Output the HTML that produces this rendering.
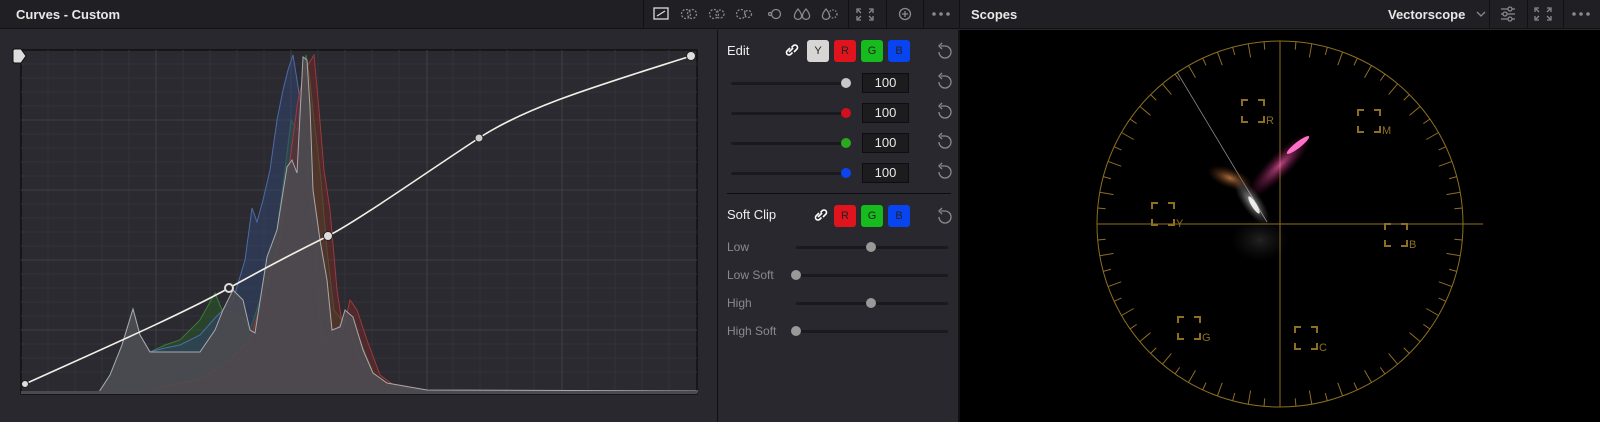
<!DOCTYPE html>
<html><head><meta charset="utf-8"><style>
*{margin:0;padding:0;box-sizing:border-box}
body{width:1600px;height:422px;background:#28282e;font-family:"Liberation Sans",sans-serif;position:relative;overflow:hidden;color:#ddd}
.abs{position:absolute}
.hdr{left:0;top:0;width:1600px;height:29px;background:#1f1f24;border-bottom:1px solid #111}
.t{font-size:13px;font-weight:bold;color:#e8e8e8}
.sep{top:0;width:1px;height:29px;background:#111}
.btn{width:22px;height:22px;border-radius:3px;font-size:11px;text-align:center;line-height:22px;color:#222}
.lab{font-size:12px;color:#8a8a8e}
.track{height:3px;background:#1a1a1e;border-radius:2px}
.knob{width:10px;height:10px;border-radius:5px}
.num{width:47px;height:20px;background:#1c1c1f;border:1px solid #0e0e10;font-size:13px;color:#e8e8e8;text-align:center;line-height:18px}
</style></head><body>
<div class="abs hdr"></div>
<div class="abs t" style="left:16px;top:7px">Curves - Custom</div>
<div class="abs sep" style="left:643px"></div>
<div class="abs sep" style="left:848px"></div>
<div class="abs sep" style="left:886px"></div>
<div class="abs sep" style="left:923px"></div>
<div class="abs sep" style="left:959px"></div>
<div class="abs sep" style="left:1489px"></div>
<div class="abs sep" style="left:1527px"></div>
<div class="abs sep" style="left:1563px"></div>
<div class="abs t" style="left:971px;top:7px">Scopes</div>
<div class="abs t" style="left:1388px;top:7px">Vectorscope</div>
<svg class="abs" style="left:0;top:0" width="1600" height="29" fill="none" stroke="#8a8a8e" stroke-width="1.3">
<rect x="654" y="8" width="14" height="11" stroke="#ddd"/><line x1="657" y1="16" x2="665" y2="11" stroke="#ddd"/>
<g stroke-dasharray="2 1.5"><circle cx="686" cy="14" r="4.5"/><circle cx="692" cy="14" r="4.5"/>
<circle cx="714" cy="14" r="4.5"/><circle cx="720" cy="14" r="4"/>
<circle cx="741" cy="14" r="4.5"/><circle cx="748" cy="14" r="3.5"/></g>
<circle cx="770" cy="14" r="1.5"/><circle cx="776" cy="14" r="4.5"/>
<path d="M798 9Q793 15 795 18A4 4 0 0 0 801 18Q803 15 798 9Z"/><path d="M806 9Q801 15 803 18A4 4 0 0 0 809 18Q811 15 806 9Z"/>
<path d="M826 9Q821 15 823 18A4 4 0 0 0 829 18Q831 15 826 9Z"/><g stroke-dasharray="1.5 1.5"><circle cx="833" cy="14" r="4"/></g>
<path d="M861 9h-4v4M869 9h4v4M861 20h-4v-4M869 20h4v-4M858 10l3 3M872 10l-3 3M858 19l3-3M872 19l-3-3"/>
<circle cx="905" cy="14" r="5.5"/><path d="M905 11v6M902 14h6"/>
<path d="M1477 12l4 4 4-4"/>
<path d="M1501 9h14M1501 14h14M1501 19h14"/><circle cx="1510" cy="9" r="2" fill="#1f1f24"/><circle cx="1505" cy="14" r="2" fill="#1f1f24"/><circle cx="1510" cy="19" r="2" fill="#1f1f24"/>
<path d="M1539 8h-4v4M1547 8h4v4M1539 20h-4v-4M1547 20h4v-4M1536 9l3 3M1550 9l-3 3M1536 19l3-3M1550 19l-3-3"/>
<g fill="#8a8a8e" stroke="none"><circle cx="934" cy="14" r="1.8"/><circle cx="941" cy="14" r="1.8"/><circle cx="948" cy="14" r="1.8"/>
<circle cx="1574" cy="14" r="1.8"/><circle cx="1581" cy="14" r="1.8"/><circle cx="1588" cy="14" r="1.8"/></g>
</svg>

<svg class="abs" style="left:0;top:0" width="717" height="422">
<rect x="21" y="50" width="676" height="344" fill="#2a2a30" stroke="#111" stroke-width="1.5"/>
<g stroke="#333339" stroke-width="1">
<path d="M48 50V394M75 50V394M102 50V394M129 50V394M183 50V394M210 50V394M237 50V394M264 50V394M318 50V394M345 50V394M372 50V394M399 50V394M453 50V394M480 50V394M507 50V394M534 50V394M588 50V394M615 50V394M642 50V394M669 50V394"/>
<path d="M21 64H697M21 78H697M21 92H697M21 106H697M21 134H697M21 148H697M21 162H697M21 176H697M21 204H697M21 218H697M21 232H697M21 246H697M21 274H697M21 288H697M21 302H697M21 316H697M21 344H697M21 358H697M21 372H697"/>
</g>
<g stroke="#3f3f46" stroke-width="1"><path d="M156 50V394M291 50V394M427 50V394M562 50V394M21 120H697M21 190H697M21 260H697M21 330H697"/></g>
<path d="M99 392L110 375L122 345L133 309L140 335L150 352L165 345L180 340L200 320L215 293L222 310L235 312L245 320L250 330L260 300L267 257L277 230L285 170L291 120L297 130L306 55L310 80L314 120L320 170L327 250L334 310L342 320L352 320L362 345L375 378L390 387L430 391L697 392Z" fill="rgba(40,90,40,0.55)" stroke="#3e7a3a" stroke-width="1"/>
<path d="M99 392L110 375L122 345L133 309L140 335L150 352L165 348L180 345L200 335L215 318L233 300L245 260L252 208L257 222L263 200L270 170L277 120L283 90L288 70L293 55L297 80L303 120L310 190L316 260L320 320L323 343L335 330L345 320L355 345L365 370L380 385L420 391L697 392Z" fill="rgba(50,70,110,0.55)" stroke="#4d6aa8" stroke-width="1"/>
<path d="M150 392L170 385L200 380L230 360L250 340L265 290L280 240L290 160L298 100L305 70L314 55L319 110L324 170L330 210L337 290L343 330L350 300L357 310L367 340L380 375L395 386L430 391L697 392Z" fill="rgba(110,40,40,0.55)" stroke="#9a3a3a" stroke-width="1"/>
<path d="M99 392L110 375L122 345L133 309L140 335L150 352L165 352L184 352L200 352L215 330L223 310L233 290L243 300L250 330L255 333L267 257L277 230L287 167L292 160L297 173L303 57L307 60L310 107L313 190L320 240L327 280L332 330L340 327L345 310L353 317L363 350L373 373L387 383L427 390L697 391L697 392Z" fill="#4c4b50" fill-opacity="0.88" stroke="#a8a8ac" stroke-width="1"/>
<line x1="21" y1="392.5" x2="697" y2="392.5" stroke="#4a4a50" stroke-width="3"/>
<path d="M25 384C100 350 180 315 229 288S300 250 328 236S430 170 479 138S600 85 691 56" fill="none" stroke="#f3efe6" stroke-width="1.6"/>
<circle cx="25" cy="384" r="3.5" fill="#ddd" stroke="#222"/>
<circle cx="229" cy="288" r="4" fill="#28282e" stroke="#ddd" stroke-width="2"/>
<circle cx="328" cy="236" r="4.5" fill="#ddd" stroke="#222"/>
<circle cx="479" cy="138" r="4" fill="#ccc" stroke="#222"/>
<circle cx="691" cy="56" r="4.5" fill="#ddd" stroke="#222"/>
<path d="M13 51Q13 49 15 49L21 49L26 56L21 63L15 63Q13 63 13 61Z" fill="#ddd" stroke="#111"/>
</svg>

<div class="abs" style="left:717px;top:30px;width:1px;height:392px;background:#111"></div>
<div class="abs" style="left:958px;top:30px;width:2px;height:392px;background:#111"></div>
<div class="abs t" style="left:727px;top:43px;font-weight:normal;color:#eee">Edit</div>
<div class="abs btn" style="left:807px;top:40px;background:#d8d6d4">Y</div>
<div class="abs btn" style="left:834px;top:40px;background:#e0141c">R</div>
<div class="abs btn" style="left:861px;top:40px;background:#16bb1e">G</div>
<div class="abs btn" style="left:888px;top:40px;background:#0845f0">B</div>
<div class="abs t" style="left:727px;top:207px;font-weight:normal;color:#eee">Soft Clip</div>
<div class="abs btn" style="left:834px;top:205px;background:#e0141c">R</div>
<div class="abs btn" style="left:861px;top:205px;background:#16bb1e">G</div>
<div class="abs btn" style="left:888px;top:205px;background:#0845f0">B</div>
<div class="abs" style="left:727px;top:193px;width:224px;height:1px;background:#0e0e10"></div>

<div class="abs track" style="left:731px;top:82px;width:115px"></div><div class="abs knob" style="left:841px;top:78px;background:#c8c8c8"></div>
<div class="abs track" style="left:731px;top:112px;width:115px"></div><div class="abs knob" style="left:841px;top:108px;background:#d0101c"></div>
<div class="abs track" style="left:731px;top:142px;width:115px"></div><div class="abs knob" style="left:841px;top:138px;background:#2aa81e"></div>
<div class="abs track" style="left:731px;top:172px;width:115px"></div><div class="abs knob" style="left:841px;top:168px;background:#0c45f0"></div>
<div class="abs num" style="left:862px;top:73px">100</div>
<div class="abs num" style="left:862px;top:103px">100</div>
<div class="abs num" style="left:862px;top:133px">100</div>
<div class="abs num" style="left:862px;top:163px">100</div>

<div class="abs lab" style="left:727px;top:240px">Low</div>
<div class="abs lab" style="left:727px;top:268px">Low Soft</div>
<div class="abs lab" style="left:727px;top:296px">High</div>
<div class="abs lab" style="left:727px;top:324px">High Soft</div>
<div class="abs track" style="left:796px;top:246px;width:152px"></div><div class="abs knob" style="left:866px;top:242px;background:#999"></div>
<div class="abs track" style="left:796px;top:274px;width:152px"></div><div class="abs knob" style="left:791px;top:270px;background:#999"></div>
<div class="abs track" style="left:796px;top:302px;width:152px"></div><div class="abs knob" style="left:866px;top:298px;background:#999"></div>
<div class="abs track" style="left:796px;top:330px;width:152px"></div><div class="abs knob" style="left:791px;top:326px;background:#999"></div>

<svg class="abs" style="left:717px;top:30px" width="241" height="200" fill="none" stroke="#8a8a8e" stroke-width="1.3">
<g id="rs"><path d="M222 22A6 6 0 1 0 228 16L224 16M225 13l-3 3 3 3"/></g>
<use href="#rs" y="30"/><use href="#rs" y="60"/><use href="#rs" y="90"/><use href="#rs" y="120"/><use href="#rs" y="165"/>
<g stroke="#fff" stroke-width="1.6"><path d="M77 22l3-3a2.5 2.5 0 0 0-3.5-3.5l-2 2M73 18l-3 3a2.5 2.5 0 0 0 3.5 3.5l2-2M72 22l4-4"/>
<path d="M77 187l3-3a2.5 2.5 0 0 0-3.5-3.5l-2 2M73 183l-3 3a2.5 2.5 0 0 0 3.5 3.5l2-2M72 187l4-4" transform="translate(29 0)"/></g>
</svg>

<div class="abs" style="left:960px;top:30px;width:640px;height:392px;background:#000"></div>
<svg class="abs" style="left:960px;top:30px" width="640" height="392">
<defs>
<radialGradient id="g1"><stop offset="0" stop-color="#ff60b0" stop-opacity=".9"/><stop offset="1" stop-color="#801050" stop-opacity="0"/></radialGradient>
<radialGradient id="g2"><stop offset="0" stop-color="#d88a50" stop-opacity=".8"/><stop offset="1" stop-color="#603010" stop-opacity="0"/></radialGradient>
<radialGradient id="g3"><stop offset="0" stop-color="#fff" stop-opacity=".9"/><stop offset="1" stop-color="#888" stop-opacity="0"/></radialGradient>
</defs>
<g id="sc" stroke="#8c6f22" fill="none" stroke-width="1"></g>
<line x1="217" y1="42" x2="307" y2="192" stroke="#888" stroke-width="0.8"/>
<ellipse cx="320" cy="135" rx="45" ry="12" fill="url(#g1)" transform="rotate(-45 320 135)" opacity=".8"/>
<ellipse cx="338" cy="115" rx="14" ry="3" fill="#ff70c8" transform="rotate(-38 338 115)"/>
<ellipse cx="270" cy="148" rx="24" ry="10" fill="url(#g2)" transform="rotate(20 270 148)"/>
<ellipse cx="292" cy="172" rx="28" ry="10" fill="url(#g3)" transform="rotate(55 292 172)" opacity=".7"/>
<ellipse cx="294" cy="175" rx="10" ry="2.5" fill="#fff" transform="rotate(58 294 175)" opacity=".85"/>
<ellipse cx="300" cy="210" rx="30" ry="22" fill="url(#g3)" opacity=".15"/>
<g fill="#8c6f22" font-size="11" font-family="Liberation Sans,sans-serif">
<text x="306" y="94">R</text><text x="422" y="104">M</text><text x="216" y="197">Y</text><text x="449" y="218">B</text><text x="242" y="311">G</text><text x="359" y="321">C</text></g>
</svg>
<script>
var g=document.getElementById('sc'),cx=320,cy=194,r=183,s='';
function L(a,b,c,d){s+='<line x1="'+a+'" y1="'+b+'" x2="'+c+'" y2="'+d+'"/>';}
s+='<circle cx="'+cx+'" cy="'+cy+'" r="'+r+'"/>';
L(cx,cy-r,cx,cy+r);L(cx-r,cy,cx+r+20,cy);
for(var i=0;i<72;i++){var a=i*5*Math.PI/180,l=(i%2?8:14);L(cx+Math.cos(a)*r,cy+Math.sin(a)*r,cx+Math.cos(a)*(r-l),cy+Math.sin(a)*(r-l));}
function box(x,y){var w=22,k=6;s+='<path d="M'+x+' '+(y+k)+'V'+y+'H'+(x+k)+'M'+(x+w-k)+' '+y+'H'+(x+w)+'V'+(y+k)+'M'+x+' '+(y+w-k)+'V'+(y+w)+'H'+(x+k)+'M'+(x+w-k)+' '+(y+w)+'H'+(x+w)+'V'+(y+w-k)+'" stroke-width="2"/>';}
box(282,70);box(398,80);box(192,173);box(425,194);box(218,287);box(335,297);
g.innerHTML=s;
</script>
</body></html>
